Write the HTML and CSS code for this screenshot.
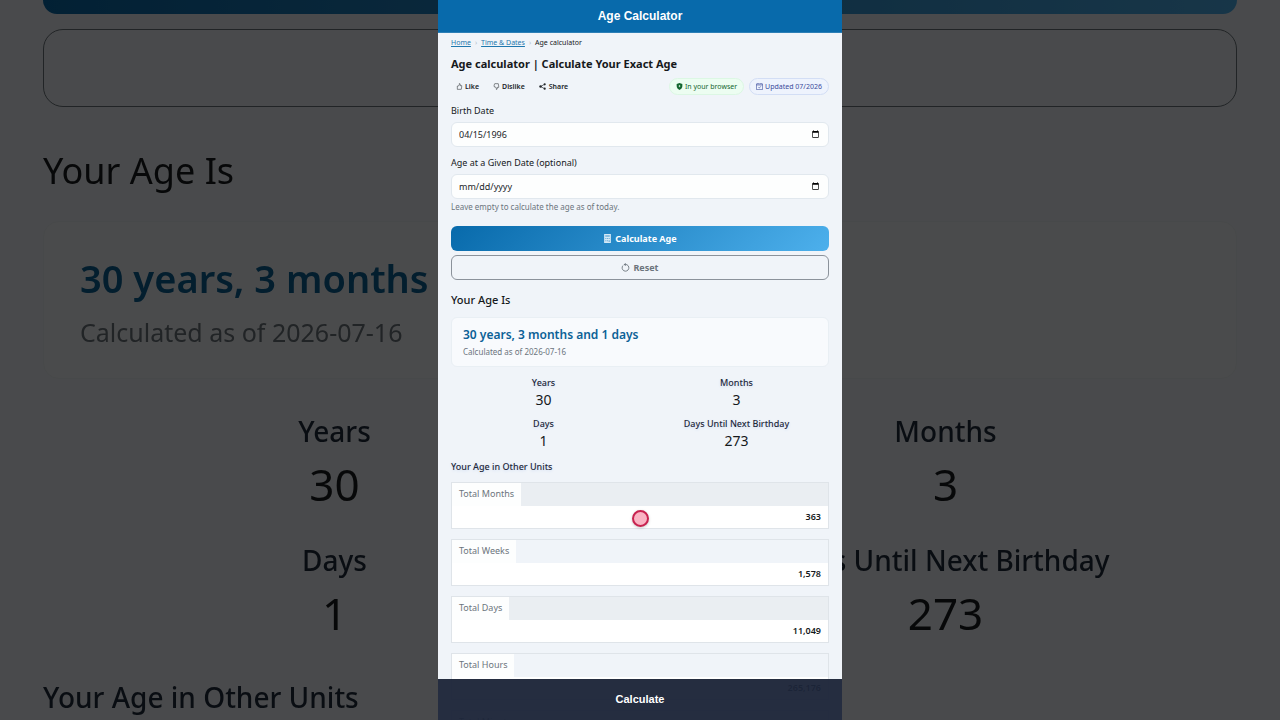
FILE: index.html
```html
<!DOCTYPE html>
<html lang="en">
<head>
    <meta charset="UTF-8">
    <meta name="viewport" content="width=device-width, initial-scale=1.0">
    <title>Age Calculator</title>
    <link rel="stylesheet" href="styles.css">
</head>
<body>
    <!-- Enlarged, dimmed copy of the result behind the app -->
    <div class="backdrop" aria-hidden="true">
        <div class="backdrop-primary"></div>
        <div class="backdrop-outline"></div>
        <div class="backdrop-heading">Your Age Is</div>
        <div class="backdrop-card">
            <div class="backdrop-age">30 years, 3 months and 1 days</div>
            <div class="backdrop-note">Calculated as of 2026-07-16</div>
        </div>
        <div class="backdrop-stats">
            <div class="backdrop-stat"><span>Years</span><b>30</b></div>
            <div class="backdrop-stat"><span>Months</span><b>3</b></div>
            <div class="backdrop-stat"><span>Days</span><b>1</b></div>
            <div class="backdrop-stat"><span>Days Until Next Birthday</span><b>273</b></div>
        </div>
        <div class="backdrop-units">Your Age in Other Units</div>
    </div>

    <div class="app">
        <header class="app-header">Age Calculator</header>

        <main class="content">
            <nav class="breadcrumb" aria-label="Breadcrumb">
                <a href="#">Home</a>
                <span class="separator">›</span>
                <a href="#">Time &amp; Dates</a>
                <span class="separator">›</span>
                <span>Age calculator</span>
            </nav>

            <h1 class="title">Age calculator | Calculate Your Exact Age</h1>

            <div class="toolbar">
                <div class="actions">
                    <button type="button" class="action">
                        <svg class="icon" viewBox="0 0 16 16" fill="none" stroke="currentColor" stroke-width="1.2"><path d="M3 7h2.500L7.500 4V1.500h1.500c1 1 1 3 .5 4.500H13v3l-1 5.500H3z"/></svg>
                        Like
                    </button>
                    <button type="button" class="action">
                        <svg class="icon" viewBox="0 0 16 16" fill="none" stroke="currentColor" stroke-width="1.2"><path d="M3 9h2.500l2 3v2.500h1.500c1-1 1-3 .5-4.500H13V7l-1-5.500H4L2.500 5z"/></svg>
                        Dislike
                    </button>
                    <button type="button" class="action action-share">
                        <svg class="icon" viewBox="0 0 16 16" fill="currentColor"><path d="M12.500 3 4 8l8.500 5" fill="none" stroke="currentColor" stroke-width="1.500"/><circle cx="13" cy="3" r="2.500"/><circle cx="3.500" cy="8" r="2.800"/><circle cx="13" cy="13" r="2.500"/></svg>
                        Share
                    </button>
                </div>
                <div class="badges">
                    <span class="badge badge-green">
                        <svg class="icon" viewBox="0 0 16 16"><path d="M8 0 14.500 2v5c0 4.500-3 7.500-6.500 9-3.500-1.500-6.500-4.500-6.500-9V2z" fill="currentColor"/><path d="M8 4.500v5M6 7h4" stroke="#e8fbee" stroke-width="1.500"/></svg>
                        In your browser
                    </span>
                    <span class="badge badge-blue">
                        <svg class="icon" viewBox="0 0 16 16" fill="none" stroke="currentColor" stroke-width="1.400"><path d="M1 2h14v13H1zM1 4.500h14M4.500 0v2M11.500 0v2M5.500 10l2 1.500 3.500-4"/></svg>
                        Updated 07/2026
                    </span>
                </div>
            </div>

            <form class="form">
                <label class="label" for="birthDate">Birth Date</label>
                <input class="field" type="date" id="birthDate" value="1996-04-15">

                <label class="label" for="targetDate">Age at a Given Date (optional)</label>
                <input class="field" type="date" id="targetDate" aria-describedby="targetHelp">
                <p class="hint" id="targetHelp">Leave empty to calculate the age as of today.</p>

                <div class="buttons">
                    <button type="button" class="btn btn-primary">
                        <svg class="btn-icon" viewBox="0 0 16 16"><path d="M2 0h12v16H2z" fill="#d5e9f6"/><path d="M4 2h8v3H4zM4 7h2v2H4zM7 7h2v2H7zM10 7h2v2h-2zM4 11h2v2H4zM7 11h2v2H7zM10 11h2v3h-2z" fill="#6fb0da"/></svg>
                        Calculate Age
                    </button>
                    <button type="reset" class="btn btn-outline">
                        <svg class="btn-icon" viewBox="0 0 16 16"><path d="M3.500 4.500A6 6 0 1 0 8 2.500" fill="none" stroke="currentColor" stroke-width="1.600"/><path d="M8.500 0v5.500L4.500 2.700z" fill="currentColor"/></svg>
                        Reset
                    </button>
                </div>
            </form>

            <h2 class="section-title">Your Age Is</h2>
            <div class="result-card">
                <div class="result-age">30 years, 3 months and 1 days</div>
                <div class="result-note">Calculated as of 2026-07-16</div>
            </div>

            <div class="stats">
                <div class="stat">
                    <div class="stat-label">Years</div>
                    <div class="stat-value">30</div>
                </div>
                <div class="stat">
                    <div class="stat-label">Months</div>
                    <div class="stat-value">3</div>
                </div>
                <div class="stat">
                    <div class="stat-label">Days</div>
                    <div class="stat-value">1</div>
                </div>
                <div class="stat">
                    <div class="stat-label">Days Until Next Birthday</div>
                    <div class="stat-value">273</div>
                </div>
            </div>

            <h3 class="units-title">Your Age in Other Units</h3>
            <table class="units">
                <tbody>
                    <tr><th scope="row">Total Months</th><td>363</td></tr>
                    <tr><th scope="row">Total Weeks</th><td>1,578</td></tr>
                    <tr><th scope="row">Total Days</th><td>11,049</td></tr>
                    <tr><th scope="row">Total Hours</th><td>265,176</td></tr>
                    <tr><th scope="row">Total Minutes</th><td>15,910,560</td></tr>
                </tbody>
            </table>
        </main>

        <button type="button" class="bottom-bar">Calculate</button>
        <span class="touch-point"></span>
    </div>
</body>
</html>
```
FILE: styles.css
```css
* {
    box-sizing: border-box;
}

body {
    margin: 0;
    height: 100vh;
    overflow: hidden;
    position: relative;
    background: #494a4b;
    font-family: "Noto Sans", "Liberation Sans", sans-serif;
    color: #16191c;
}

/* Backdrop */
.backdrop {
    position: absolute;
    inset: 0;
    padding: 0 43px;
    overflow: hidden;
    background: #f0f4f8;
    filter: brightness(0.305);
}

.backdrop-primary {
    height: 14px;
    border-radius: 0 0 20px 20px;
    background: linear-gradient(90deg, #086aab, #4db0ec);
}

.backdrop-outline {
    height: 78px;
    margin-top: 15px;
    border: 1px solid #6c757d;
    border-radius: 20px;
}

.backdrop-heading {
    margin-top: 38px;
    font-size: 36px;
    line-height: 52px;
}

.backdrop-card {
    height: 158px;
    margin-top: 24px;
    padding: 30px 36px;
    border: 1px solid #e9eef3;
    border-radius: 16px;
    background: #f4f6f8;
}

.backdrop-age {
    font-size: 38px;
    font-weight: 600;
    line-height: 52px;
    color: #0b6196;
}

.backdrop-note {
    margin-top: 10px;
    font-size: 25px;
    line-height: 36px;
    color: #6c757d;
}

.backdrop-stats {
    display: grid;
    grid-template-columns: 1fr 1fr;
    gap: 23px 28px;
    margin-top: 32px;
    text-align: center;
}

.backdrop-stat span {
    display: block;
    font-size: 28px;
    font-weight: 500;
    line-height: 40px;
    color: #1e293b;
}

.backdrop-stat b {
    display: block;
    font-size: 44px;
    font-weight: 400;
    line-height: 66px;
}

.backdrop-units {
    margin-top: 31px;
    font-size: 28px;
    font-weight: 500;
    line-height: 40px;
    color: #1e293b;
}

/* App column */
.app {
    position: relative;
    width: 100%;
    max-width: 404px;
    height: 100%;
    margin: 0 auto;
    overflow: hidden;
    background: #f0f4f9;
}

.app-header {
    padding: 8px;
    background: #086aab;
    border-bottom: 1px solid #2d7fb6;
    color: #fff;
    font-family: "Liberation Sans", sans-serif;
    font-size: 12px;
    font-weight: bold;
    line-height: 16px;
    text-align: center;
}

.content {
    padding: 4px 13px 0;
}

.breadcrumb {
    display: flex;
    gap: 4px;
    font-size: 7px;
    line-height: 12px;
}

.breadcrumb a {
    color: #1f78ae;
}

.separator {
    color: #b6c0ca;
}

.title {
    margin: 7px 0 0;
    font-size: 11px;
    font-weight: 700;
    line-height: 16px;
}

.toolbar,
.actions,
.badges {
    display: flex;
    align-items: center;
}

.toolbar {
    justify-content: space-between;
    margin-top: 6px;
}

.actions {
    gap: 14px;
    padding-left: 5px;
}

.action {
    display: flex;
    align-items: center;
    gap: 2px;
    padding: 0;
    border: 0;
    background: none;
    color: #212529;
    font-family: inherit;
    font-size: 7px;
    font-weight: 600;
    line-height: 10px;
}

.action-share {
    gap: 3px;
}

.icon {
    width: 7px;
    height: 7px;
}

.badges {
    gap: 5px;
}

.badge {
    display: flex;
    align-items: center;
    gap: 2px;
    padding: 2px 6px;
    border: 1px solid;
    border-radius: 9px;
    font-size: 7px;
    line-height: 11px;
}

.badge-green {
    border-color: #dcf7e4;
    background: #ecfdf1;
    color: #14662f;
}

.badge-blue {
    border-color: #d3def5;
    background: #eef3fd;
    color: #3b4b9c;
}

/* Form */
.label {
    display: block;
    margin: 10px 0 5px;
    font-size: 9px;
    line-height: 12px;
}

.field {
    display: block;
    width: 100%;
    height: 25px;
    padding: 0 7px;
    border: 1px solid #e1e8ee;
    border-radius: 6px;
    background: #fdfefe;
    color: #212529;
    font-family: inherit;
    font-size: 9px;
}

.field::-webkit-datetime-edit-fields-wrapper,
.field::-webkit-datetime-edit-month-field,
.field::-webkit-datetime-edit-day-field,
.field::-webkit-datetime-edit-year-field {
    padding: 0;
}

.field::-webkit-calendar-picker-indicator {
    padding: 1px;
}

.hint {
    margin: 2px 0 0;
    font-size: 8px;
    line-height: 12px;
    color: #6c757d;
}

.buttons {
    display: flex;
    flex-direction: column;
    gap: 4px;
    margin-top: 13px;
}

.btn {
    display: flex;
    align-items: center;
    justify-content: center;
    gap: 3px;
    height: 25px;
    padding: 0 6px;
    border: 1px solid transparent;
    border-radius: 6px;
    font-family: inherit;
    font-size: 9px;
    font-weight: 700;
}

.btn-primary {
    border: 0;
    background: linear-gradient(135deg, #086aab, #4db0ec);
    color: #fff;
}

.btn-outline {
    border-color: #8b929b;
    background: transparent;
    color: #6c757d;
}

.btn-icon {
    width: 9px;
    height: 9px;
}

/* Result */
.section-title {
    margin: 12px 0 9px;
    font-size: 11px;
    font-weight: 500;
    line-height: 16px;
}

.result-card {
    padding: 9px 11px 8px;
    border: 1px solid #e9eff4;
    border-radius: 6px;
    background: #f8fafd;
}

.result-age {
    font-size: 12px;
    font-weight: 600;
    line-height: 16px;
    color: #0b6196;
}

.result-note {
    margin-top: 3px;
    font-size: 8px;
    line-height: 12px;
    color: #6c757d;
}

.stats {
    display: grid;
    grid-template-columns: 1fr 1fr;
    gap: 7px 8px;
    margin-top: 10px;
    text-align: center;
}

.stat-label,
.units-title {
    font-size: 9px;
    font-weight: 500;
    line-height: 12px;
    color: #1e293b;
    text-shadow: 0 1px 3px #cfdcf2;
}

.stat-value {
    font-size: 14px;
    line-height: 22px;
}

.units-title {
    margin: 9px 0;
}

/* Units table, one block per row */
.units {
    display: block;
    font-size: 9px;
    line-height: 12px;
}

.units tbody {
    display: flex;
    flex-direction: column;
    gap: 10px;
}

.units tr {
    display: flex;
    flex-direction: column;
    border: 1px solid #dfe4e9;
    background: #f0f4f9;
}

.units tr:nth-child(odd) {
    background: #eaeef2;
}

.units th {
    align-self: flex-start;
    padding: 5px 7px 6px;
    background: #fdfefe;
    color: #6c757d;
    font-weight: 400;
}

.units td {
    padding: 5px 7px;
    background: #fff;
    font-weight: 600;
    text-align: right;
}

.bottom-bar {
    position: absolute;
    left: 0;
    right: 0;
    bottom: 0;
    height: 41px;
    padding: 0 0 2px;
    border: 0;
    background: rgba(28, 36, 56, 0.96);
    color: #fff;
    font-family: "Liberation Sans", sans-serif;
    font-size: 11px;
    font-weight: bold;
}

.touch-point {
    position: absolute;
    top: 510px;
    left: 50%;
    width: 17px;
    height: 17px;
    margin-left: -8px;
    border: 2px solid #c8224f;
    border-radius: 50%;
    background: #fab3c3;
    box-shadow: 0 1px 3px rgba(0, 0, 0, 0.2);
}
```
